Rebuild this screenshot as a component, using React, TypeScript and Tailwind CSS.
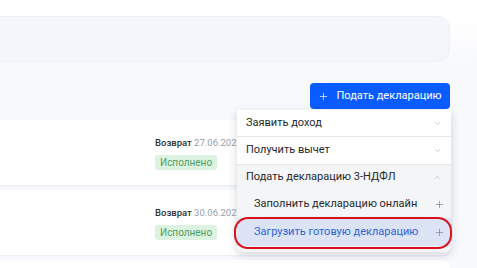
import { ChevronDown, ChevronUp, Plus } from "lucide-react";

const refunds = [
  { date: "27.06.2023" },
  { date: "30.06.2023" },
  { date: "" },
];

const RefundCard = ({ date }: { date: string }) => (
  <div className="-ml-4 h-[65px] rounded-lg bg-white shadow-[0_1px_2px_rgba(20,30,60,0.06)] pl-[171px] pt-[17px]">
    {date && (
      <>
        <div className="text-[9.5px] leading-[12px] whitespace-nowrap">
          <span className="font-medium text-[#2b2f36]">Возврат</span>{" "}
          <span className="text-[#9aa0aa]">{date}</span>
        </div>
        <span className="mt-[4px] inline-flex h-[15px] items-center rounded-[3px] bg-[#ddf3e2] px-[5px] text-[10px] text-[#4f9e61]">
          Исполнено
        </span>
      </>
    )}
  </div>
);

const App = () => {
  return (
    <div
      className="relative h-[268px] w-[477px] overflow-hidden bg-gradient-to-b from-white from-[6%] to-[#f8f9fc] to-[25%] pr-[27px] pt-[16px]"
      style={{ fontFamily: "Roboto, 'Open Sans', sans-serif" }}
    >
      {/* search / filter panel */}
      <div className="-ml-4 h-[46px] rounded-xl border border-[#edf0f6] bg-[#f4f6fb]" />

      {/* actions */}
      <div className="mt-[21px] flex justify-end">
        <button className="flex h-[26px] w-[140px] items-center justify-center gap-[7px] rounded-[4px] bg-[#0b5cff] text-[11px] text-white">
          <Plus className="h-[11px] w-[11px]" strokeWidth={1.5} />
          Подать декларацию
        </button>
      </div>

      {/* list */}
      <div className="mt-[11px] flex flex-col gap-[5px]">
        {refunds.map((r, i) => (
          <RefundCard key={i} date={r.date} />
        ))}
      </div>

      {/* dropdown */}
      <div className="absolute left-[237px] top-[110px] w-[214px] overflow-hidden rounded-b-md bg-white text-[11px] text-[#25282d] shadow-[0_3px_10px_rgba(20,30,60,0.18)]">
        <div className="flex h-[27px] items-center justify-between border-b border-[#e6e8ec] pl-[9px] pr-[9px]">
          Заявить доход
          <ChevronDown className="h-[9px] w-[9px] text-[#a9adb5]" strokeWidth={1.5} />
        </div>
        <div className="flex h-[28px] items-center justify-between border-b border-[#e6e8ec] pl-[9px] pr-[9px]">
          Получить вычет
          <ChevronDown className="h-[9px] w-[9px] text-[#a9adb5]" strokeWidth={1.5} />
        </div>
        <div className="bg-[#f4f5f7] pb-[6px]">
          <div className="flex h-[25px] items-center justify-between pl-[9px] pr-[9px]">
            Подать декларацию 3-НДФЛ
            <ChevronUp className="h-[9px] w-[9px] text-[#a9adb5]" strokeWidth={1.5} />
          </div>
          <div className="flex h-[28px] items-center justify-between pl-[17px] pr-[6px]">
            Заполнить декларацию онлайн
            <Plus className="h-[11px] w-[11px] text-[#7d828b]" strokeWidth={1.5} />
          </div>
          <div className="flex h-[28px] items-center justify-between bg-[#dbe3f4] pl-[17px] pr-[6px] text-[#2f63d6]">
            Загрузить готовую декларацию
            <Plus className="h-[11px] w-[11px] text-[#7d828b]" strokeWidth={1.5} />
          </div>
        </div>
      </div>

      {/* red highlight marker */}
      <div className="pointer-events-none absolute left-[234px] top-[217px] h-[32px] w-[218px] rounded-[14px] border-[2.5px] border-[#d8101c]" />
    </div>
  );
};

export default App;
